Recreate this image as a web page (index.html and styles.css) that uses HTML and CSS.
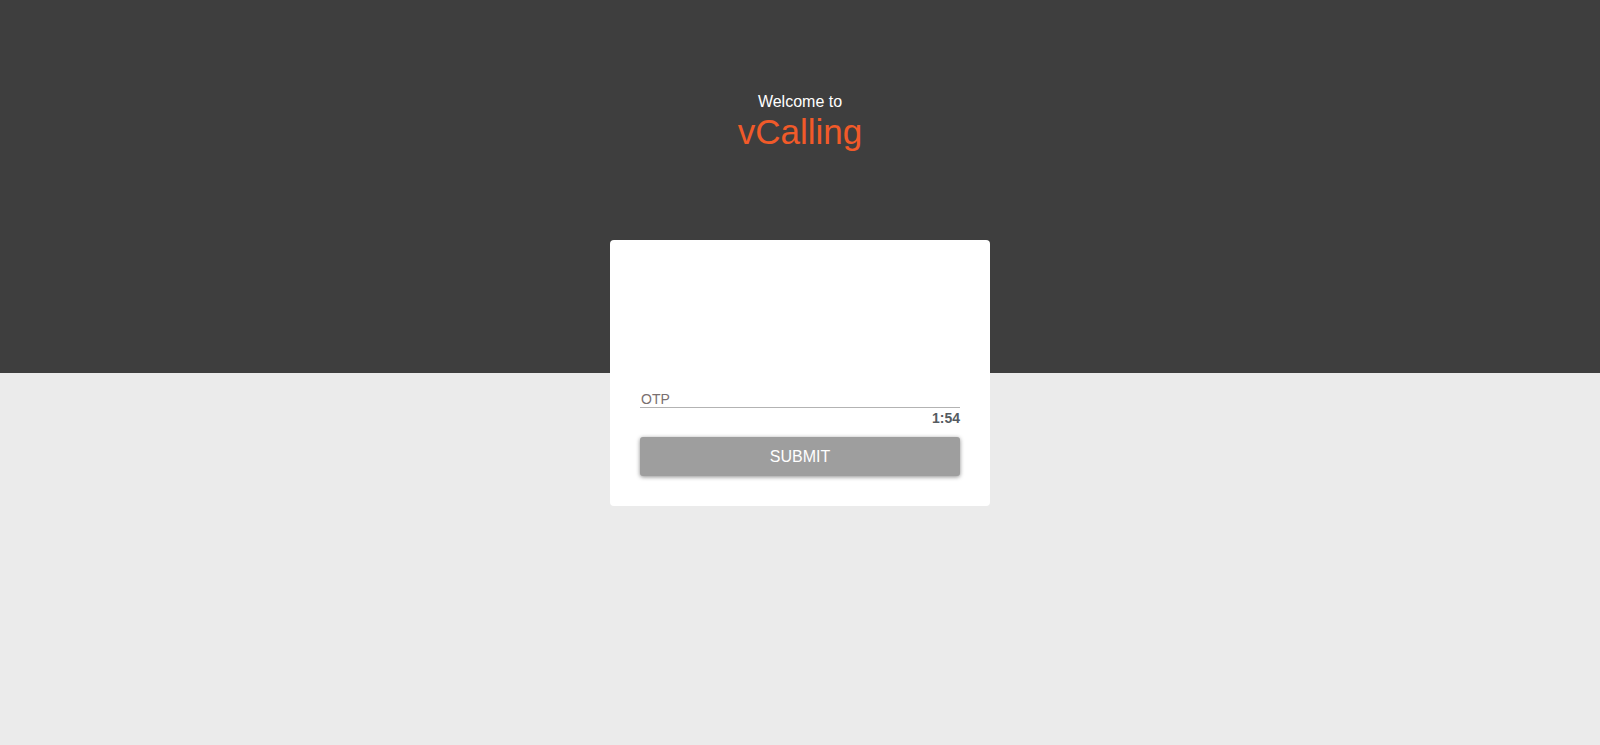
FILE: index.html
```html
<!DOCTYPE html>
<html lang="en">
<head>
<meta charset="utf-8">
<title>vCalling</title>
<link rel="stylesheet" href="styles.css">
</head>
<body>
<main class="page">
  <header class="brand">
    <div class="welcome">Welcome to</div>
    <h1 class="app-name">vCalling</h1>
  </header>
  <section class="card">
    <div class="logo-space"></div>
    <input class="otp" type="text" placeholder="OTP">
    <div class="timer">1:54</div>
    <button class="submit" type="button">SUBMIT</button>
  </section>
</main>
</body>
</html>
```
FILE: styles.css
```css
html, body {
  margin: 0;
  padding: 0;
}
body {
  min-height: 745px;
  background: linear-gradient(#3e3e3e 0, #3e3e3e 373px, #ebebeb 373px, #ebebeb 100%);
  font-family: "Liberation Sans", Arial, sans-serif;
}
.page {
  display: flex;
  flex-direction: column;
  align-items: center;
  padding-top: 93px;
}
.brand {
  text-align: center;
}
.welcome {
  color: #ffffff;
  font-size: 16px;
  line-height: 18px;
}
.app-name {
  margin: 1px 0 0;
  color: #f15a29;
  font-size: 35px;
  font-weight: normal;
  line-height: 40px;
}
.card {
  margin-top: 88px;
  width: 320px;
  padding: 30px;
  background: #ffffff;
  border-radius: 4px;
  display: flex;
  flex-direction: column;
}
.logo-space {
  height: 120px;
}
.otp {
  box-sizing: border-box;
  width: 100%;
  height: 18px;
  margin: 0;
  padding: 0 1px;
  border: none;
  border-bottom: 1px solid #b3b3b3;
  outline: none;
  font-family: "Liberation Sans", Arial, sans-serif;
  font-size: 14px;
  line-height: 17px;
  color: #333;
  background: transparent;
}
.otp::placeholder {
  color: #7a7070;
}
.timer {
  margin-top: 2px;
  text-align: right;
  font-size: 14px;
  font-weight: bold;
  line-height: 16px;
  color: #555b61;
}
.submit {
  margin-top: 11px;
  height: 39px;
  width: 100%;
  border: none;
  border-radius: 3px;
  background: #9e9e9e;
  color: #ffffff;
  font-family: "Liberation Sans", Arial, sans-serif;
  font-size: 16px;
  box-shadow: 0 1px 4px rgba(0, 0, 0, 0.45);
  cursor: pointer;
}
```
